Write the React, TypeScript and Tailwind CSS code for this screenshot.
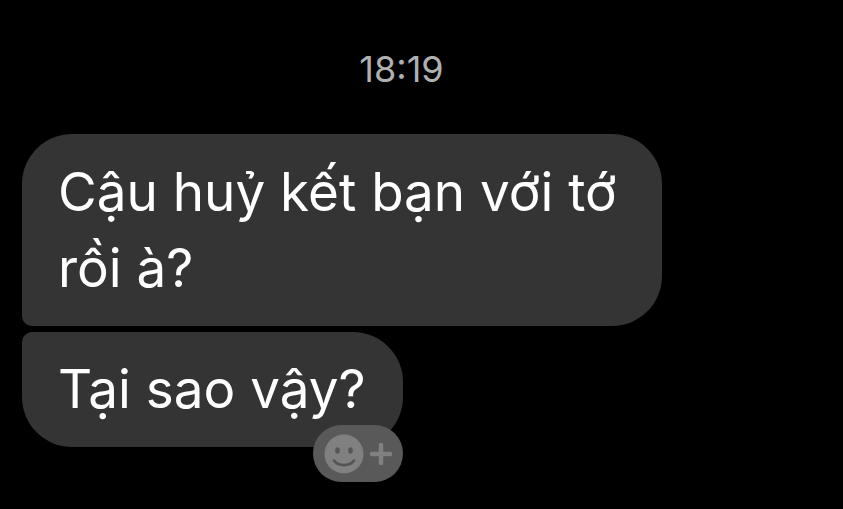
function ReactionButton() {
  return (
    <button
      type="button"
      aria-label="Add reaction"
      className="absolute -bottom-[35px] right-0 flex h-[57px] w-[90px] items-center justify-center gap-1.5 rounded-full bg-[#595959]"
    >
      <svg viewBox="0 0 40 40" className="h-10 w-10" aria-hidden="true">
        <circle cx="20" cy="20" r="19.5" fill="#808080" />
        <ellipse cx="13.5" cy="16.500" rx="2.3" ry="3.3" fill="#555555" />
        <ellipse cx="26.5" cy="16.500" rx="2.3" ry="3.3" fill="#555555" />
        <path
          d="M10 26.500c4.500 6.200 15.500 6.200 20 0"
          fill="none"
          stroke="#555555"
          strokeWidth="2.600"
          strokeLinecap="round"
        />
      </svg>
      <svg viewBox="0 0 22 22" className="h-[22px] w-[22px]" aria-hidden="true">
        <path
          d="M11 2v18M2 11h18"
          fill="none"
          stroke="#808080"
          strokeWidth="4.500"
          strokeLinecap="round"
        />
      </svg>
    </button>
  );
}

export default function App() {
  return (
    <main className="min-h-screen bg-black pt-[49px] font-['Inter','Noto_Sans',sans-serif] text-white">
      <time
        dateTime="18:19"
        className="block pr-10 text-center text-[36px] leading-[40px] text-[#b0b0b0]"
      >
        18:19
      </time>
      <section className="mt-[45px] flex flex-col items-start gap-1.5 px-[22px] text-[53px] leading-[76px]">
        <p className="max-w-[640px] rounded-[50px] rounded-bl-[10px] bg-[#343434] pt-5 pr-[37px] pb-5 pl-9">
          Cậu huỷ kết bạn với tớ rồi à?
        </p>
        <div className="relative rounded-[50px] rounded-tl-[10px] bg-[#343434] pt-[19px] pr-[37px] pb-5 pl-9">
          <p>Tại sao vậy?</p>
          <ReactionButton />
        </div>
      </section>
    </main>
  );
}
